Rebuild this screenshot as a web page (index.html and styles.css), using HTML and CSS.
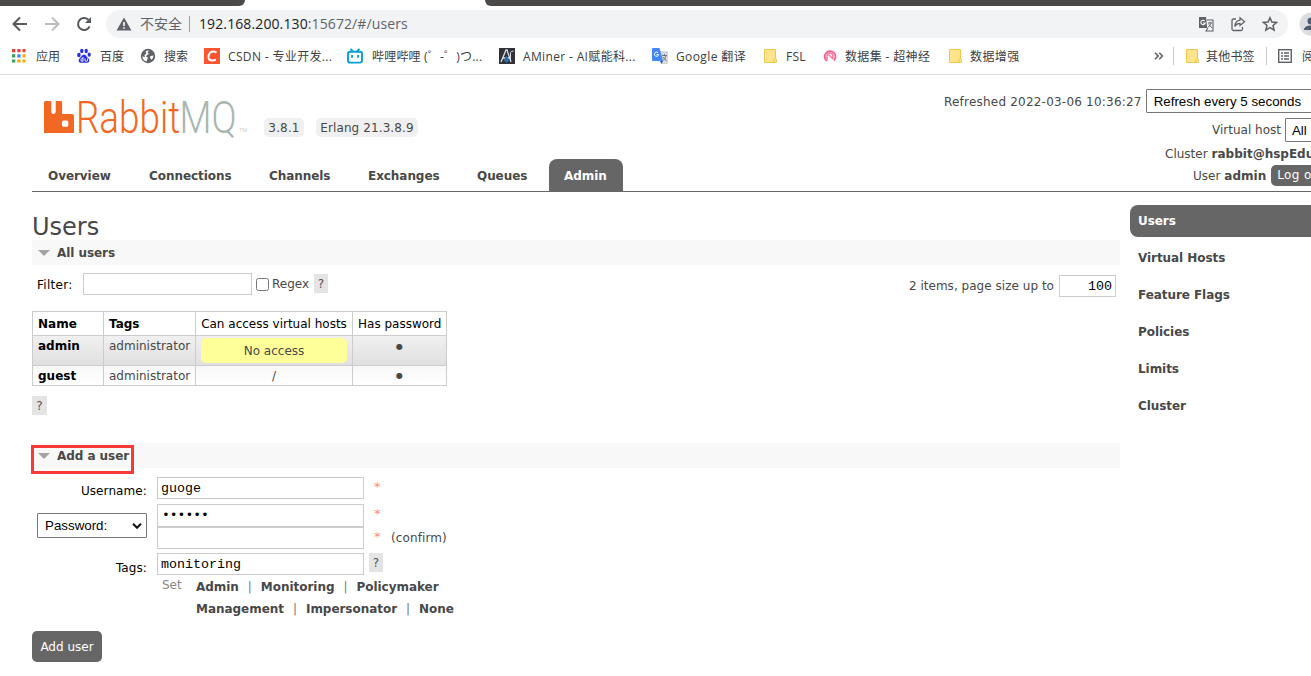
FILE: index.html
```html
<!DOCTYPE html>
<html lang="zh-CN">
<head>
    <meta charset="UTF-8">
    <title>RabbitMQ Management</title>
    <link rel="stylesheet" href="styles.css">
</head>
<body>
    <!-- browser bar -->
    <div class="tabstrip">
        <div class="tab-left"></div>
        <div class="tab-right"></div>
    </div>
    <div class="toolbar">
        <svg class="nav-icon" viewBox="0 0 16 16"><path d="M15 8H2M8 1.5L1.5 8L8 14.5" fill="none" stroke="#55585c" stroke-width="2"/></svg>
        <svg class="nav-icon" viewBox="0 0 16 16"><path d="M1 8H14M8 1.5L14.5 8L8 14.5" fill="none" stroke="#babcbe" stroke-width="2"/></svg>
        <svg class="nav-icon" viewBox="0 0 16 16"><path d="M13.6 10.3A6 6 0 1 1 12.3 3.8" fill="none" stroke="#55585c" stroke-width="2"/><path d="M15 1V7H9z" fill="#55585c"/></svg>
        <div class="omnibox">
            <svg class="warn" viewBox="0 0 16 14"><path d="M8 0.5L15.5 13.5H0.5z" fill="#5f6368"/><path d="M7.2 5h1.6v4H7.2zM7.2 10.2h1.6v1.6H7.2z" fill="#fff"/></svg>
            <span class="unsafe">不安全</span>
            <span class="sep"></span>
            <span class="url"><b>192.168.200.130</b>:15672/#/users</span>
            <svg class="act" viewBox="0 0 16 16"><path d="M1 1h7l1.2 11H1z" fill="#5f6368"/><path d="M8.5 4H15v11H8l1.8-3" fill="none" stroke="#5f6368" stroke-width="1.1"/><path d="M6.8 5A2.2 2.2 0 1 0 7.2 7H5" fill="none" stroke="#fff" stroke-width="1.1"/><path d="M10 7h4M12 6v1M13.3 7.2L10 11.5M11 8.5l3 3.5" fill="none" stroke="#5f6368"/></svg>
            <svg class="act" viewBox="0 0 16 16"><path d="M6 3H3.5Q2 3 2 4.500V13q0 1.500 1.500 1.500H11q1.500 0 1.500-1.500v-2" fill="none" stroke="#5f6368" stroke-width="1.300"/><path d="M10 1.800L14.600 5.700L10 9.500V7.400Q6.500 7.400 4.800 10.500Q5.200 4.800 10 4.200z" fill="none" stroke="#5f6368" stroke-width="1.200"/></svg>
            <svg class="act" viewBox="0 0 16 16"><path d="M8 1.700L9.900 6l4.700.4-3.600 3.100 1.100 4.600L8 11.600l-4.100 2.500L5 9.500 1.400 6.400 6.100 6z" fill="none" stroke="#5f6368" stroke-width="1.500"/></svg>
        </div>
        <svg class="avatar" viewBox="0 0 24 24"><circle cx="12" cy="12" r="11.500" fill="#dadce0"/><circle cx="12" cy="9" r="3.500" fill="#4d5a70"/><path d="M5 18q0-4.500 7-4.500t7 4.500z" fill="#4d5a70"/></svg>
    </div>
    <div class="bookmarks">
        <div class="bm bm-apps">
            <svg viewBox="0 0 16 16"><path d="M1 1h3.300v3.300H1zM6.300 1h3.300v3.300H6.300zM11.500 1h3v3.300h-3z" fill="#ea4335"/><path d="M1 6.300h3.300v3.300H1zM1 11.500h3.300v3H1z" fill="#34a05a"/><path d="M6.300 6.300h3.300v3.300H6.300z" fill="#4285f4"/><path d="M11.500 6.300h3v3.300h-3zM6.300 11.500h3.300v3H6.300zM11.500 11.500h3v3h-3z" fill="#f9ab00"/></svg>
            <span>应用</span>
        </div>
        <div class="bm bm-baidu">
            <svg viewBox="0 0 16 16"><g fill="#2932e1"><ellipse cx="2.900" cy="7" rx="1.800" ry="2.200"/><ellipse cx="5.800" cy="3" rx="1.700" ry="2.300"/><ellipse cx="10.200" cy="3" rx="1.700" ry="2.300"/><ellipse cx="13.200" cy="6.600" rx="1.600" ry="2.200"/><path d="M8 6.500c2 0 2.500 2.300 4 3.600 2.400 2 1.300 4.900-1 4.700-2-.2-4-.2-6 0-2.300.2-3.400-2.700-1-4.700C5.500 8.800 6 6.500 8 6.500z"/></g><path d="M7 9v4.200H5.500q-1.300-1.600 0-2.500H7M9 10.500v2.300q1.300 1 2.500 0v-2.300" fill="none" stroke="#fff" stroke-width=".9"/></svg>
            <span>百度</span>
        </div>
        <div class="bm bm-search">
            <svg viewBox="0 0 16 16"><circle cx="8" cy="8" r="7.200" fill="#5f6368"/><path d="M9 2.300L7.500 4.500 9 6l-2 1-1 1.500 2 1.200-1 2.300-.5 1.500Q2.600 12.300 2.400 8.500L5 9 4.500 7l2-1.500-1-2.300z" fill="#fff"/><path d="M10.500 8l3-.5q0 2.700-2.200 4.300l-1.300-2z" fill="#fff"/></svg>
            <span>搜索</span>
        </div>
        <div class="bm bm-csdn">
            <svg viewBox="0 0 16 16"><path d="M0 0h16v16H0z" fill="#fc5531"/><path d="M12.500 4.600Q9 2.500 6.200 4.500Q4 7 4.600 10.200Q5.500 13.500 12 11.800" fill="none" stroke="#fff" stroke-width="2"/></svg>
            <span>CSDN - 专业开发...</span>
        </div>
        <div class="bm bm-bili">
            <svg viewBox="0 0 16 16"><rect x="1" y="3.800" width="14" height="10.800" rx="2" fill="none" stroke="#00a1d6" stroke-width="1.900"/><path d="M3.500.8l2.500 2.500M12.500.8L10 3.300M5 7v2.800M11 7v2.800" stroke="#00a1d6" stroke-width="1.900"/></svg>
            <span>哔哩哔哩 (゜-゜)つ...</span>
        </div>
        <div class="bm bm-aminer">
            <svg viewBox="0 0 16 16"><path d="M0 0h16v16H0z" fill="#303238"/><path d="M2 14L7 2h1l4 12M4 10h7" fill="none" stroke="#d9dde5" stroke-width="1.300"/><path d="M11.500 13V4.500Q12 3 14.500 3" fill="none" stroke="#d9dde5"/><path d="M7.500 8l3 4-3 3-3-3z" fill="#2e6ca6"/></svg>
            <span>AMiner - AI赋能科...</span>
        </div>
        <div class="bm bm-trans">
            <svg viewBox="0 0 16 16"><path d="M6 3h9q1 0 1 1v12H9z" fill="#d5d7da"/><path d="M1 0h6.500L11 13H1q-1 0-1-1V1q0-1 1-1z" fill="#4386f5"/><path d="M8 13h3l-1.500 3z" fill="#2855c5"/><path d="M6 4.700A2.100 2.100 0 1 0 6.600 6.500H4.600" fill="none" stroke="#fff"/><path d="M10 7.500h5M12.500 6v1.500M14 8q-1 3-3 4.500M11 9l3.500 4" fill="none" stroke="#727980"/></svg>
            <span>Google 翻译</span>
        </div>
        <div class="bm bm-fsl">
            <svg viewBox="0 0 16 16"><path d="M2.500 1.500h11v9l.8.500v3.500H2.500z" fill="#ffe48b" stroke="#edc64d"/><path d="M11.700 14.500v-2.800l1.300-1" fill="none" stroke="#edc64d"/></svg>
            <span>FSL</span>
        </div>
        <div class="bm bm-hyper">
            <svg viewBox="0 0 16 16"><path d="M4.800 12.800A5.400 5.400 0 1 1 11.800 12.500" fill="none" stroke="#f55d91" stroke-width="1.800"/><path d="M5 12.500V8q0-3 3-3t3 3v2M6.500 6.500L11 11" fill="none" stroke="#f779a5" stroke-width="1.500"/></svg>
            <span>数据集 - 超神经</span>
        </div>
        <div class="bm bm-data">
            <svg viewBox="0 0 16 16"><path d="M2.500 1.500h11v9l.8.500v3.500H2.500z" fill="#ffe48b" stroke="#edc64d"/><path d="M11.700 14.500v-2.800l1.300-1" fill="none" stroke="#edc64d"/></svg>
            <span>数据增强</span>
        </div>
        <svg class="more" viewBox="0 0 10 8"><path d="M1 .8L4.200 4L1 7.200M5.200 .8L8.400 4L5.200 7.200" fill="none" stroke="#5f6368" stroke-width="1.600"/></svg>
        <div class="bm bm-other">
            <svg viewBox="0 0 16 16"><path d="M2.500 1.500h11v9l.8.500v3.500H2.500z" fill="#ffe48b" stroke="#edc64d"/><path d="M11.700 14.500v-2.800l1.300-1" fill="none" stroke="#edc64d"/></svg>
            <span>其他书签</span>
        </div>
        <div class="bm bm-reading">
            <svg viewBox="0 0 16 16"><rect x="1.700" y="1.700" width="12.600" height="12.600" fill="none" stroke="#5f6368" stroke-width="1.400"/><path d="M4 5h2M4 8h2M4 11h2M7 5h5M7 8h5M7 11h5" stroke="#5f6368" stroke-width="1.400"/></svg>
            <span>阅</span>
        </div>
    </div>

    <!-- header -->
    <div class="header">
        <div class="brand">
            <svg class="logo" viewBox="0 0 204 40">
                <path d="M1.500 2H6q1.300 0 1.300 1.300V12q0 3 2.200 3t2.200-3V3.300Q11.700 2 13 2h3.800q1.300 0 1.300 1.300V15H28q2 0 2 2v17H0V3.500Q0 2 1.500 2zM19.500 21.500q-1.500 0-1.500 1.500v3.300q0 1.500 1.500 1.500h3.300q1.500 0 1.500-1.500V23q0-1.500-1.500-1.500z" fill="#f26822" fill-rule="evenodd"/>
                <text class="logo-rabbit" x="32" y="33.500" textLength="104" lengthAdjust="spacingAndGlyphs">Rabbit</text>
                <text class="logo-mq" x="135.500" y="33.500" textLength="57" lengthAdjust="spacingAndGlyphs">MQ</text>
                <text class="logo-tm" x="195" y="33" textLength="8" lengthAdjust="spacingAndGlyphs">TM</text>
            </svg>
            <span class="version">3.8.1</span>
            <span class="version erlang">Erlang 21.3.8.9</span>
        </div>
        <div class="status">
            <div class="status-row refresh"><span class="refreshed">Refreshed 2022-03-06 10:36:27</span><span class="select">Refresh every 5 seconds</span></div>
            <div class="status-row vhost">Virtual host <span class="select">All</span></div>
            <div class="status-row cluster">Cluster <b>rabbit@hspEdu</b></div>
            <div class="status-row user">User <b>admin</b> <span class="logout">Log out</span></div>
        </div>
    </div>
    <div class="menu">
        <a class="m-overview">Overview</a>
        <a class="m-connections">Connections</a>
        <a class="m-channels">Channels</a>
        <a class="m-exchanges">Exchanges</a>
        <a class="m-queues">Queues</a>
        <a class="selected">Admin</a>
    </div>

    <div class="page">
        <div class="main">
            <h1>Users</h1>
            <h2><i class="arrow"></i>All users</h2>
            <div class="filter">
                <label>Filter:</label>
                <input type="text" class="filter-input">
                <input type="checkbox">
                <span class="regex">Regex</span>
                <span class="help">?</span>
                <span class="items">2 items, page size up to</span>
                <input type="text" class="pagesize" value="100">
            </div>
            <table class="list">
                <tr class="head"><th class="c1">Name</th><th class="c2">Tags</th><td class="c3">Can access virtual hosts</td><td class="c4">Has password</td></tr>
                <tr class="alt1"><th>admin</th><td class="tag">administrator</td><td class="c3"><p class="warning">No access</p></td><td class="dot">●</td></tr>
                <tr class="alt2"><th>guest</th><td class="tag">administrator</td><td class="c3">/</td><td class="dot">●</td></tr>
            </table>
            <span class="help help-table">?</span>

            <h2 class="add"><i class="arrow"></i>Add a user<span class="mark"></span></h2>
            <div class="form">
                <div class="field f-name">
                    <label>Username:</label>
                    <input type="text" value="guoge">
                    <span class="mand">*</span>
                </div>
                <div class="field f-pass">
                    <div class="pass-type">Password:<svg viewBox="0 0 10 6"><path d="M1 .8L5 4.800L9 .8" fill="none" stroke="#111" stroke-width="2"/></svg></div>
                    <div class="pass-inputs">
                        <div class="pass-row"><input type="text" class="dots" value="••••••"><span class="mand">*</span></div>
                        <div class="pass-row"><input type="text"><span class="mand">*</span><span class="confirm">(confirm)</span></div>
                    </div>
                </div>
                <div class="field f-tags">
                    <label>Tags:</label>
                    <input type="text" value="monitoring">
                    <span class="help">?</span>
                </div>
                <div class="tagset">
                    <span class="set">Set</span>
                    <div class="taglinks">
                        <div><b>Admin</b><i>|</i><b>Monitoring</b><i>|</i><b>Policymaker</b></div>
                        <div><b>Management</b><i>|</i><b>Impersonator</b><i>|</i><b>None</b></div>
                    </div>
                </div>
                <button class="submit">Add user</button>
            </div>
        </div>
        <div class="rhs">
            <a class="selected">Users</a>
            <a>Virtual Hosts</a>
            <a>Feature Flags</a>
            <a>Policies</a>
            <a>Limits</a>
            <a>Cluster</a>
        </div>
    </div>
</body>
</html>
```
FILE: styles.css
```css
* {
    box-sizing: border-box;
}

body {
    margin: 0;
    width: 1311px;
    height: 676px;
    overflow: hidden;
    background: #fff;
    color: #484848;
    font: 12px "DejaVu Sans", sans-serif;
    letter-spacing: 0;
    white-space: nowrap;
}

svg {
    flex: none;
    display: block;
}

/* browser */
.tabstrip {
    display: flex;
    justify-content: space-between;
    height: 6px;
}

.tab-left, .tab-right {
    background: #4b4a48;
}

.tab-left {
    width: 245px;
    border-radius: 0 0 6px 0;
}

.tab-right {
    width: 826px;
    border-radius: 0 0 0 6px;
}

.toolbar {
    display: flex;
    align-items: center;
    height: 36px;
    padding-left: 12px;
    overflow: hidden;
}

.nav-icon {
    width: 16px;
    height: 16px;
    margin-right: 16px;
}

.omnibox {
    display: flex;
    align-items: center;
    flex: none;
    width: 1182px;
    height: 28px;
    margin-left: -2px;
    padding: 0 10px;
    border-radius: 14px;
    background: #f1f3f4;
    color: #5f6368;
    font: 14px "Open Sans", "Noto Sans CJK SC", sans-serif;
}

.warn {
    width: 16px;
    height: 14px;
}

.unsafe {
    width: 49px;
    margin-left: 8px;
    padding-bottom: 2px;
}

.sep {
    width: 1px;
    height: 16px;
    margin: 0 9px 0 0;
    background: #9a9da1;
}

.url {
    flex: 1;
    padding-bottom: 2px;
    letter-spacing: 0.11px;
}

.url b {
    font-weight: normal;
    color: #202124;
}

.act {
    width: 16px;
    height: 16px;
    margin-left: 16px;
}

.avatar {
    width: 24px;
    height: 24px;
    margin-left: 11px;
}

.bookmarks {
    display: flex;
    align-items: center;
    height: 33px;
    padding: 0 0 4px 11px;
    border-bottom: 1px solid #dcdde0;
    color: #3c4043;
    font: 12px "Open Sans", "Noto Sans CJK SC", sans-serif;
    overflow: hidden;
}

.bm {
    display: flex;
    align-items: center;
    flex: none;
    gap: 9px;
}

.bm svg {
    width: 16px;
    height: 16px;
}

.bm-apps { width: 65px; }
.bm-baidu { width: 64px; gap: 8px; }
.bm-search { width: 64px; gap: 8px; }
.bm-csdn { width: 143px; gap: 8px; letter-spacing: 0.35px; }
.bm-bili { width: 152px; letter-spacing: 0.2px; }
.bm-aminer { width: 153px; gap: 8px; letter-spacing: 0.35px; }
.bm-trans { width: 110px; gap: 8px; letter-spacing: 0.4px; }
.bm-fsl { width: 60px; gap: 8px; letter-spacing: 0.2px; }
.bm-hyper { width: 125px; gap: 7px; letter-spacing: 0.35px; }
.bm-data { width: 207px; gap: 7px; letter-spacing: 0.4px; }

.more {
    width: 10px;
    height: 8px;
    margin-right: 9px;
}

.bm-other {
    width: 93px;
    gap: 6px;
    padding-left: 10px;
    border-left: 1px solid #c8cacd;
    letter-spacing: 0.2px;
}

.bm-reading {
    padding-left: 10px;
    border-left: 1px solid #c8cacd;
}

/* header */
.header {
    display: flex;
    justify-content: space-between;
    height: 84px;
}

.brand {
    display: flex;
    padding-left: 44px;
}

.logo {
    width: 204px;
    height: 40px;
    margin-top: 24px;
}

.logo text {
    font-family: Roboto, sans-serif;
    font-weight: 300;
    font-size: 44px;
    letter-spacing: 0;
}

.logo-rabbit {
    fill: #f26822;
}

.logo-mq {
    fill: #a9b6b0;
}

.logo .logo-tm {
    font-size: 6px;
    fill: #a9b6b0;
}

.version {
    width: 40px;
    height: 19px;
    margin: 43px 0 0 16px;
    border-radius: 5px;
    background: #f0f0f0;
    line-height: 20px;
    letter-spacing: 0.15px;
    text-align: center;
}

.erlang {
    width: 102px;
    margin-left: 12px;
    letter-spacing: 0.1px;
}

.status {
    width: 367px;
    height: 116px;
    padding-top: 14px;
    overflow: hidden;
}

.status-row {
    display: flex;
    align-items: center;
    gap: 4px;
    height: 22px;
}

.refresh {
    height: 24px;
}

.refreshed {
    width: 198px;
    padding-top: 2px;
    letter-spacing: 0.21px;
}

.vhost {
    height: 32px;
    padding: 1px 0 0 268px;
}

.cluster {
    height: 16px;
    padding: 2px 0 0 221px;
}

.user {
    height: 28px;
    padding: 1px 0 0 249px;
}

.select {
    width: 180px;
    height: 24px;
    padding-left: 7px;
    flex: none;
    border: 1px solid #767676;
    border-radius: 1px;
    color: #000;
    font: 13.33px/23px "Liberation Sans", sans-serif;
}

.vhost .select {
    padding-left: 6px;
}

.logout {
    height: 21px;
    margin-left: 1px;
    padding: 0 6px;
    border-radius: 5px;
    background: #666;
    color: #fff;
    line-height: 21px;
    letter-spacing: 0.4px;
}

.menu {
    display: flex;
    height: 33px;
    margin-left: 32px;
    border-bottom: 1px solid #666;
    font-weight: bold;
    line-height: 34px;
    letter-spacing: -0.06px;
}

.menu a {
    flex: none;
    padding-left: 16px;
}

.m-overview { width: 101px; }
.m-connections { width: 120px; }
.m-channels { width: 99px; }
.m-exchanges { width: 109px; }
.m-queues { width: 88px; }

.menu .selected {
    width: 74px;
    padding-left: 15px;
    border-radius: 8px 8px 0 0;
    background: #666;
    color: #fff;
}

/* content */
.page {
    display: flex;
    gap: 10px;
    padding: 13px 0 0 32px;
}

.main {
    width: 1088px;
    flex: none;
}

h1 {
    height: 35px;
    margin: 0;
    font-size: 24px;
    font-weight: normal;
    line-height: 45px;
}

h2 {
    display: flex;
    align-items: center;
    height: 25px;
    margin: 0;
    padding-left: 6px;
    background: #f8f8f8;
    font-size: 12px;
    letter-spacing: -0.06px;
}

.arrow {
    margin-right: 7px;
    border: 6px solid transparent;
    border-top-color: #a3a3a3;
    border-bottom: none;
}

.filter {
    display: flex;
    height: 46px;
    padding: 8px 4px 0 5px;
    line-height: 25px;
}

.filter label {
    width: 46px;
    color: #000;
    letter-spacing: 0.3px;
}

input[type=text] {
    width: 207px;
    height: 22px;
    padding: 0 3px;
    border: 1px solid #ccc;
    color: #000;
    font: 13.33px "Liberation Mono", monospace;
}

input.filter-input {
    width: 169px;
}

input[type=checkbox] {
    width: 13px;
    height: 13px;
    margin: 5px 3px 0 4px;
}

.regex {
    width: 42px;
    line-height: 23px;
}

.help {
    width: 14px;
    height: 19px;
    background: #e4e4e4;
    color: #555;
    font-size: 12px;
    line-height: 20px;
    text-align: center;
}

.filter .help {
    margin-top: 1px;
}

.items {
    margin-left: auto;
    line-height: 27px;
    letter-spacing: 0.03px;
}

input.pagesize {
    width: 57px;
    margin: 2px 0 0 5px;
    text-align: right;
}

.filter-input, .filter .help {
    flex: none;
}

.list {
    width: 415px;
    border-collapse: collapse;
    table-layout: fixed;
}

.list th, .list td {
    padding: 0 5px;
    border: 1px solid #ccc;
    text-align: left;
    vertical-align: top;
    line-height: 20px;
}

.list th {
    color: #000;
}

.list .alt1 th, .list .alt1 td {
    line-height: 21px;
}

.list .alt2 th, .list .alt2 td {
    height: 20px;
    line-height: 19px;
    padding-top: 1px;
    line-height: 18px;
}

.list .head th, .list .head td {
    height: 24px;
    color: #000;
    line-height: 23px;
    padding-top: 1px;
    line-height: 22px;
}

.c1 { width: 71px; }
.c2 { width: 92px; }
.c3 { width: 157px; }
.c4 { width: 94px; }

.list td.c3, .list td.dot {
    text-align: center;
}

.list td.dot {
    font-size: 8px;
}

.alt1 {
    height: 30px;
    background: linear-gradient(#f0f0f0, #dfdfdf);
}

.alt2 {
    height: 20px;
    background: linear-gradient(#f8f8f8, #fff);
}

.warning {
    height: 25px;
    margin: 2px 0 0;
    border-radius: 5px;
    background: #ff9;
    line-height: 26px;
}

.help-table {
    display: block;
    width: 15px;
    margin-top: 10px;
}

.add {
    position: relative;
    margin-top: 28px;
}

/* red frame over the section title */
.mark {
    position: absolute;
    left: -1px;
    top: 2px;
    width: 103px;
    height: 29px;
    border: 3px solid #f93838;
}

.field {
    display: flex;
}

.field label {
    width: 115px;
    margin-right: 10px;
    color: #000;
    line-height: 28px;
    letter-spacing: 0.1px;
    text-align: right;
}

.mand {
    width: 27px;
    padding-left: 10px;
    color: #f88;
    font-size: 13px;
    line-height: 20px;
}

.f-name {
    padding-top: 9px;
    height: 36px;
}

.f-pass {
    height: 49px;
}

.pass-type {
    display: flex;
    align-items: center;
    justify-content: space-between;
    width: 110px;
    height: 25px;
    margin: 9px 10px 0 5px;
    padding: 0 4px 0 7px;
    border: 1px solid #767676;
    border-radius: 1px;
    color: #000;
    font: 13.33px "Liberation Sans", sans-serif;
}

.pass-type svg {
    width: 10px;
    height: 6px;
}

.pass-row {
    display: flex;
    height: 23px;
}

.pass-row:first-child input {
    height: 23px;
}

input.dots {
    padding-left: 4px;
    font-size: 13px;
}

.confirm {
    line-height: 22px;
    letter-spacing: 0.1px;
}

.f-tags .help {
    margin-left: 5px;
}

.f-tags {
    height: 22px;
}

.f-tags label {
    line-height: 31px;
}

.tagset {
    display: flex;
    padding: 1px 0 0 130px;
    line-height: 22px;
}

.set {
    width: 34px;
    color: #888;
    line-height: 18px;
}

.taglinks {
    letter-spacing: -0.04px;
}

.taglinks i {
    margin: 0 9px;
    font-style: normal;
    color: #777;
}

.submit {
    display: block;
    width: 70px;
    height: 31px;
    margin-top: 11px;
    padding: 0;
    border: none;
    border-radius: 5px;
    background: #666;
    color: #fff;
    font: 12px "DejaVu Sans", sans-serif;
}

.rhs {
    display: flex;
    flex-direction: column;
    flex: none;
    gap: 5px;
    width: 181px;
    font-weight: bold;
    letter-spacing: -0.06px;
}

.rhs a {
    height: 32px;
    padding-left: 8px;
    line-height: 32px;
}

.rhs .selected {
    border-radius: 8px 0 0 8px;
    background: #666;
    color: #fff;
}
```
